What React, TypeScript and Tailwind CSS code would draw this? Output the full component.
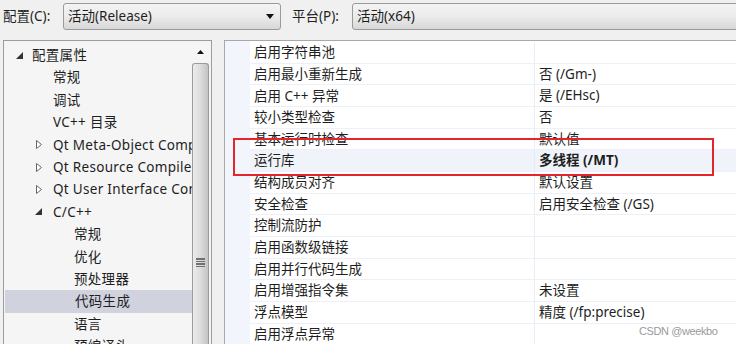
import React from 'react';

const FONT = { fontFamily: '"Noto Sans", "Noto Sans CJK SC", sans-serif' };

type TreeItem = { label: string; level: 0 | 1 | 2; arrow?: 'open' | 'closed' };

const TREE: TreeItem[] = [
  { label: '配置属性', level: 0, arrow: 'open' },
  { label: '常规', level: 1 },
  { label: '调试', level: 1 },
  { label: 'VC++ 目录', level: 1 },
  { label: 'Qt Meta-Object Compiler', level: 1, arrow: 'closed' },
  { label: 'Qt Resource Compiler', level: 1, arrow: 'closed' },
  { label: 'Qt User Interface Compiler', level: 1, arrow: 'closed' },
  { label: 'C/C++', level: 1, arrow: 'open' },
  { label: '常规', level: 2 },
  { label: '优化', level: 2 },
  { label: '预处理器', level: 2 },
  { label: '代码生成', level: 2 },
  { label: '语言', level: 2 },
  { label: '预编译头', level: 2 },
];

const PROPS: [string, string][] = [
  ['启用字符串池', ''],
  ['启用最小重新生成', '否 (/Gm-)'],
  ['启用 C++ 异常', '是 (/EHsc)'],
  ['较小类型检查', '否'],
  ['基本运行时检查', '默认值'],
  ['运行库', '多线程 (/MT)'],
  ['结构成员对齐', '默认设置'],
  ['安全检查', '启用安全检查 (/GS)'],
  ['控制流防护', ''],
  ['启用函数级链接', ''],
  ['启用并行代码生成', ''],
  ['启用增强指令集', '未设置'],
  ['浮点模型', '精度 (/fp:precise)'],
  ['启用浮点异常', ''],
];

const SELECTED_PROP = 5;
const SELECTED_NODE = 11;

function Combo({ text, arrow }: { text: string; arrow?: boolean }) {
  return (
    <div className="flex h-[27px] flex-1 items-center justify-between rounded-[3px] border border-[#9a9a9a] bg-gradient-to-b from-[#f4f4f4] via-[#ebebeb] to-[#d8d8d8] pl-[4px] pr-[6px]">
      <span>{text}</span>
      {arrow && (
        <svg width="8" height="5" viewBox="0 0 8 5" aria-hidden="true">
          <path d="M0 0h8L4 5z" fill="#111" />
        </svg>
      )}
    </div>
  );
}

function Arrow({ kind }: { kind: 'open' | 'closed' }) {
  if (kind === 'open') {
    return (
      <svg width="7" height="7" viewBox="0 0 7 7" aria-hidden="true">
        <path d="M7 0v7H0z" fill="#333" />
      </svg>
    );
  }
  return (
    <svg width="6" height="9" viewBox="0 0 6 9" aria-hidden="true">
      <path d="M0.5 0.5L5.5 4.5L0.5 8.5z" fill="#fff" stroke="#666" />
    </svg>
  );
}

export default function App() {
  return (
    <div
      className="relative h-[344px] w-[736px] overflow-hidden bg-[#f0f0f0] text-[13.5px] text-[#1e1e1e]"
      style={FONT}
    >
      {/* configuration / platform bar */}
      <div className="flex h-[33px] items-center pl-[3px]">
        <span className="w-[60px]">配置(C):</span>
        <div className="flex w-[218px]">
          <Combo text="活动(Release)" arrow />
        </div>
        <span className="ml-[11px] w-[60px]">平台(P):</span>
        <div className="mr-[-10px] flex flex-1">
          <Combo text="活动(x64)" />
        </div>
      </div>

      <div className="mt-[7px] flex h-[304px]">
        {/* tree */}
        <div className="ml-[3px] flex w-[209px] border-l border-t border-r border-[#9c9c9c] bg-[#f5f5f5]">
          <ul className="min-w-0 flex-1 pt-[3px]">
            {TREE.map((n, i) => (
              <li
                key={i}
                className={`flex h-[22.4px] items-center overflow-hidden whitespace-nowrap ${
                  i === SELECTED_NODE ? 'ml-[1px] bg-[#d0d2de]' : ''
                }`}
              >
                <span
                  className={`flex shrink-0 items-center justify-center ${
                    n.level === 0 ? 'w-[28px] pl-[2px]' : n.level === 1 ? 'w-[49px] pl-[20px]' : 'w-[70px]'
                  }`}
                >
                  {n.arrow && <Arrow kind={n.arrow} />}
                </span>
                <span className="tracking-[0.3px]">{n.label}</span>
              </li>
            ))}
          </ul>
          {/* scrollbar */}
          <div className="flex w-[19px] shrink-0 flex-col pr-[2px]">
            <div className="flex h-[22px] items-center justify-center">
              <svg width="7" height="4" viewBox="0 0 7 4" aria-hidden="true">
                <path d="M0 4h7L3.5 0z" fill="#111" />
              </svg>
            </div>
            <div className="flex flex-1 flex-col items-center rounded-t-[3px] border border-b-0 border-[#9b9b9b] bg-gradient-to-r from-[#ececec] via-[#dcdcdc] to-[#c4c4c4]">
              <div className="mt-[194px] flex w-[9px] flex-col gap-[1px]">
                <div className="h-[1.5px] bg-[#707070]" />
                <div className="h-[1.5px] bg-[#707070]" />
                <div className="h-[1.5px] bg-[#707070]" />
                <div className="h-[1.5px] bg-[#707070]" />
              </div>
            </div>
          </div>
        </div>

        {/* property grid */}
        <div className="ml-[12px] flex flex-1 border-l border-t border-[#a8a8a8] bg-white">
          <div className="w-[25px] shrink-0 bg-[#f2f6fc]" />
          <div className="flex-1 pt-[1px]">
            {PROPS.map(([k, v], i) => (
              <div
                key={i}
                className={`flex h-[21.67px] items-center border-b border-[#edf1f7] ${
                  i === SELECTED_PROP ? 'bg-[#f0f3f9]' : ''
                }`}
              >
                <div className="w-[284px] shrink-0 whitespace-nowrap pl-[4px]">{k}</div>
                <div
                  className={`h-full flex-1 whitespace-nowrap border-l border-[#e6edf7] pl-[4px] leading-[21px] ${
                    i === SELECTED_PROP ? 'font-bold' : ''
                  }`}
                >
                  {v}
                </div>
              </div>
            ))}
          </div>
        </div>
      </div>

      {/* annotation box */}
      <div className="pointer-events-none absolute left-[233px] top-[138px] h-[38px] w-[481px] border-2 border-[#e3262e]" />

      {/* watermark */}
      <div
        className="pointer-events-none absolute left-[639px] top-[323px] text-[11px] tracking-[-0.4px] text-[#9a9a9a]"
        style={{ fontFamily: '"Liberation Sans", sans-serif' }}
      >
        CSDN @weekbo
      </div>
    </div>
  );
}
